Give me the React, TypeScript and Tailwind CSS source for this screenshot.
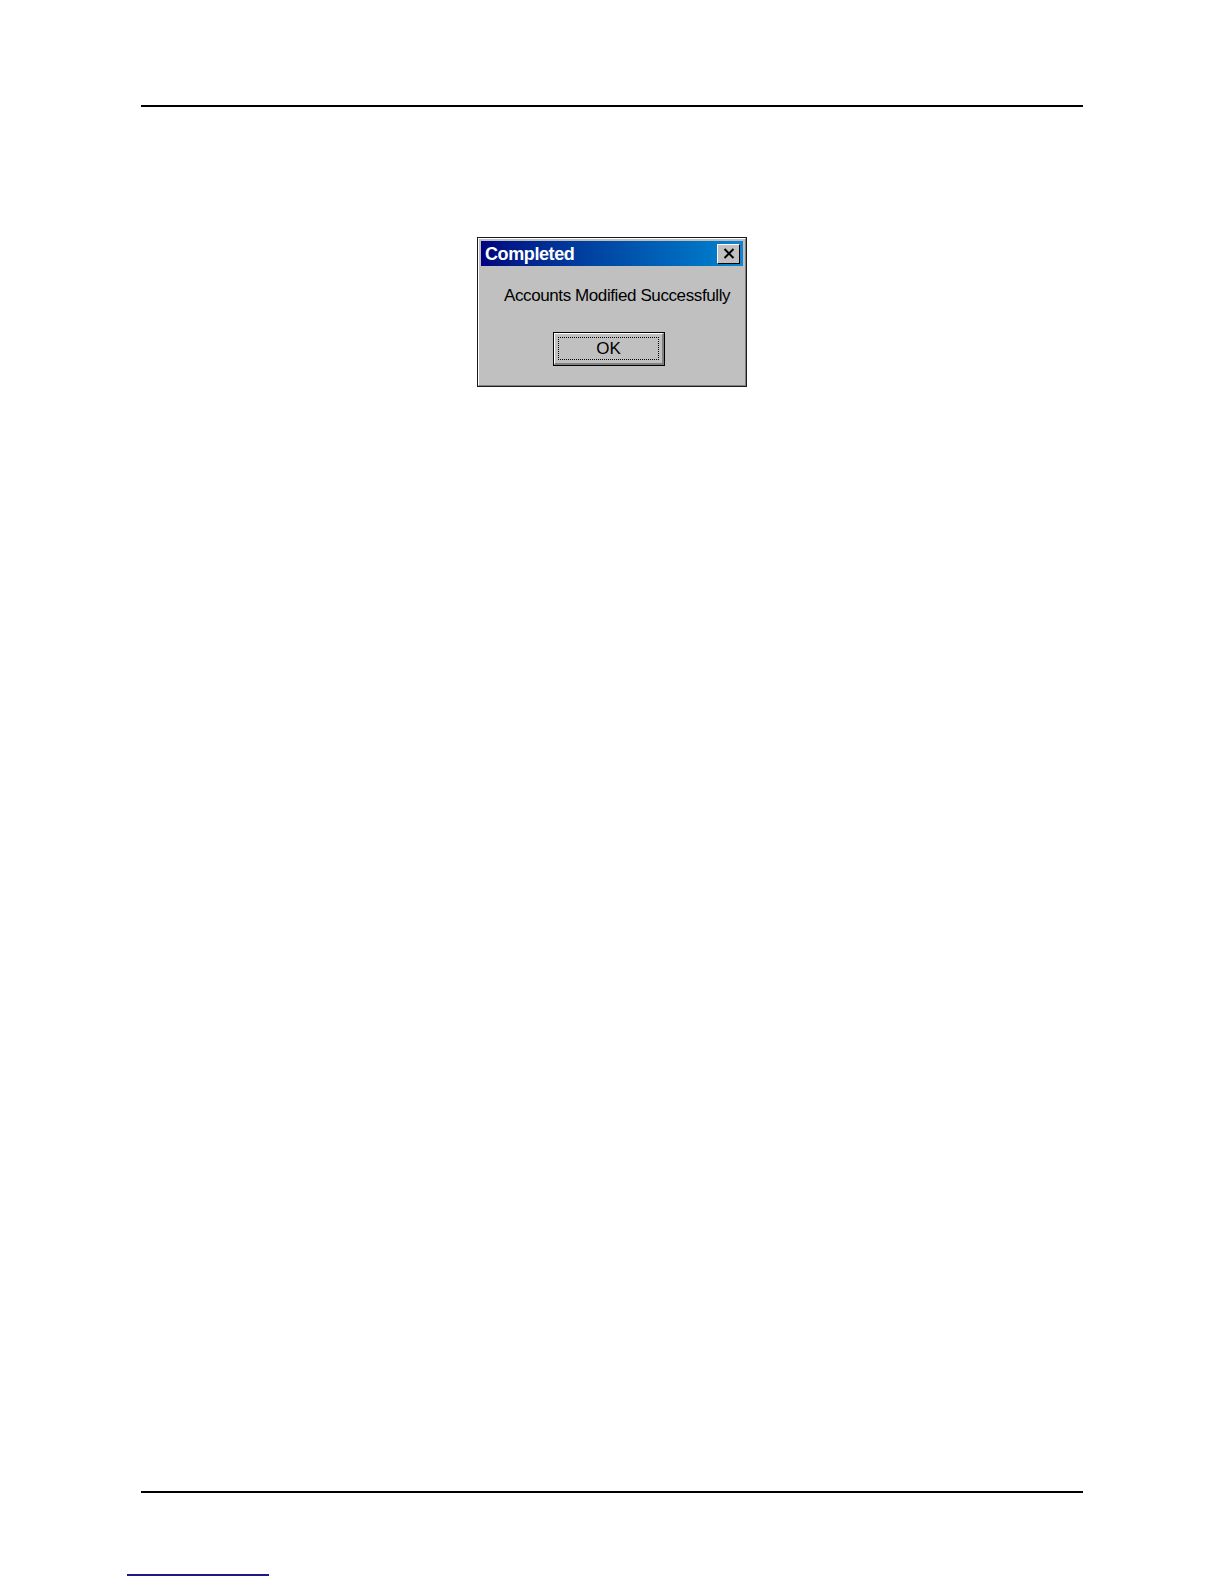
export default function App() {
  return (
    <div className="w-[1224px] h-[1584px] bg-white flex flex-col font-['Liberation_Sans',Arial,sans-serif]">
      <div className="h-[105px]" />
      <div className="ml-[141px] w-[942px] h-[2px] bg-black" />

      <div className="mt-[130px] ml-[477px] w-[270px] h-[150px] border border-[#1a1a1a] bg-[#c0c0c0]">
        <div className="h-full border-t border-l border-white border-b border-r border-b-[#808080] border-r-[#808080] p-[2px] flex flex-col">
          {/* title bar */}
          <div className="h-[25px] bg-gradient-to-r from-[#000080] to-[#1084d0] flex items-center justify-between pl-[4px] pr-[3px]">
            <span className="text-white font-bold text-[18px] leading-none tracking-[-0.4px]">Completed</span>
            <div className="w-[23px] h-[20px] bg-[#c0c0c0] border-t border-l border-white border-b border-r border-b-black border-r-black flex items-center justify-center">
              <svg width="12" height="11" viewBox="0 0 12 11">
                <path d="M1.5 1 L10.5 10 M10.5 1 L1.5 10" stroke="#000" strokeWidth="2" />
              </svg>
            </div>
          </div>

          {/* message */}
          <div className="mt-[20px] ml-[23px] text-[17px] leading-[20px] text-black tracking-[-0.4px]">
            Accounts Modified Successfully
          </div>

          {/* OK button */}
          <div className="mt-[26px] ml-[72px] w-[112px] h-[34px] border border-black">
            <div className="h-full border-t border-l border-white border-b-2 border-r-2 border-b-[#808080] border-r-[#808080] p-[3px]">
              <div className="h-full border border-dotted border-black flex items-center justify-center text-[17px] text-black leading-none">
                OK
              </div>
            </div>
          </div>
        </div>
      </div>

      <div className="mt-[1104px] ml-[141px] w-[942px] h-[2px] bg-black" />
      <div className="mt-[81px] ml-[127px] w-[142px] h-[2px] bg-[#1a1a8c]" />
    </div>
  );
}
